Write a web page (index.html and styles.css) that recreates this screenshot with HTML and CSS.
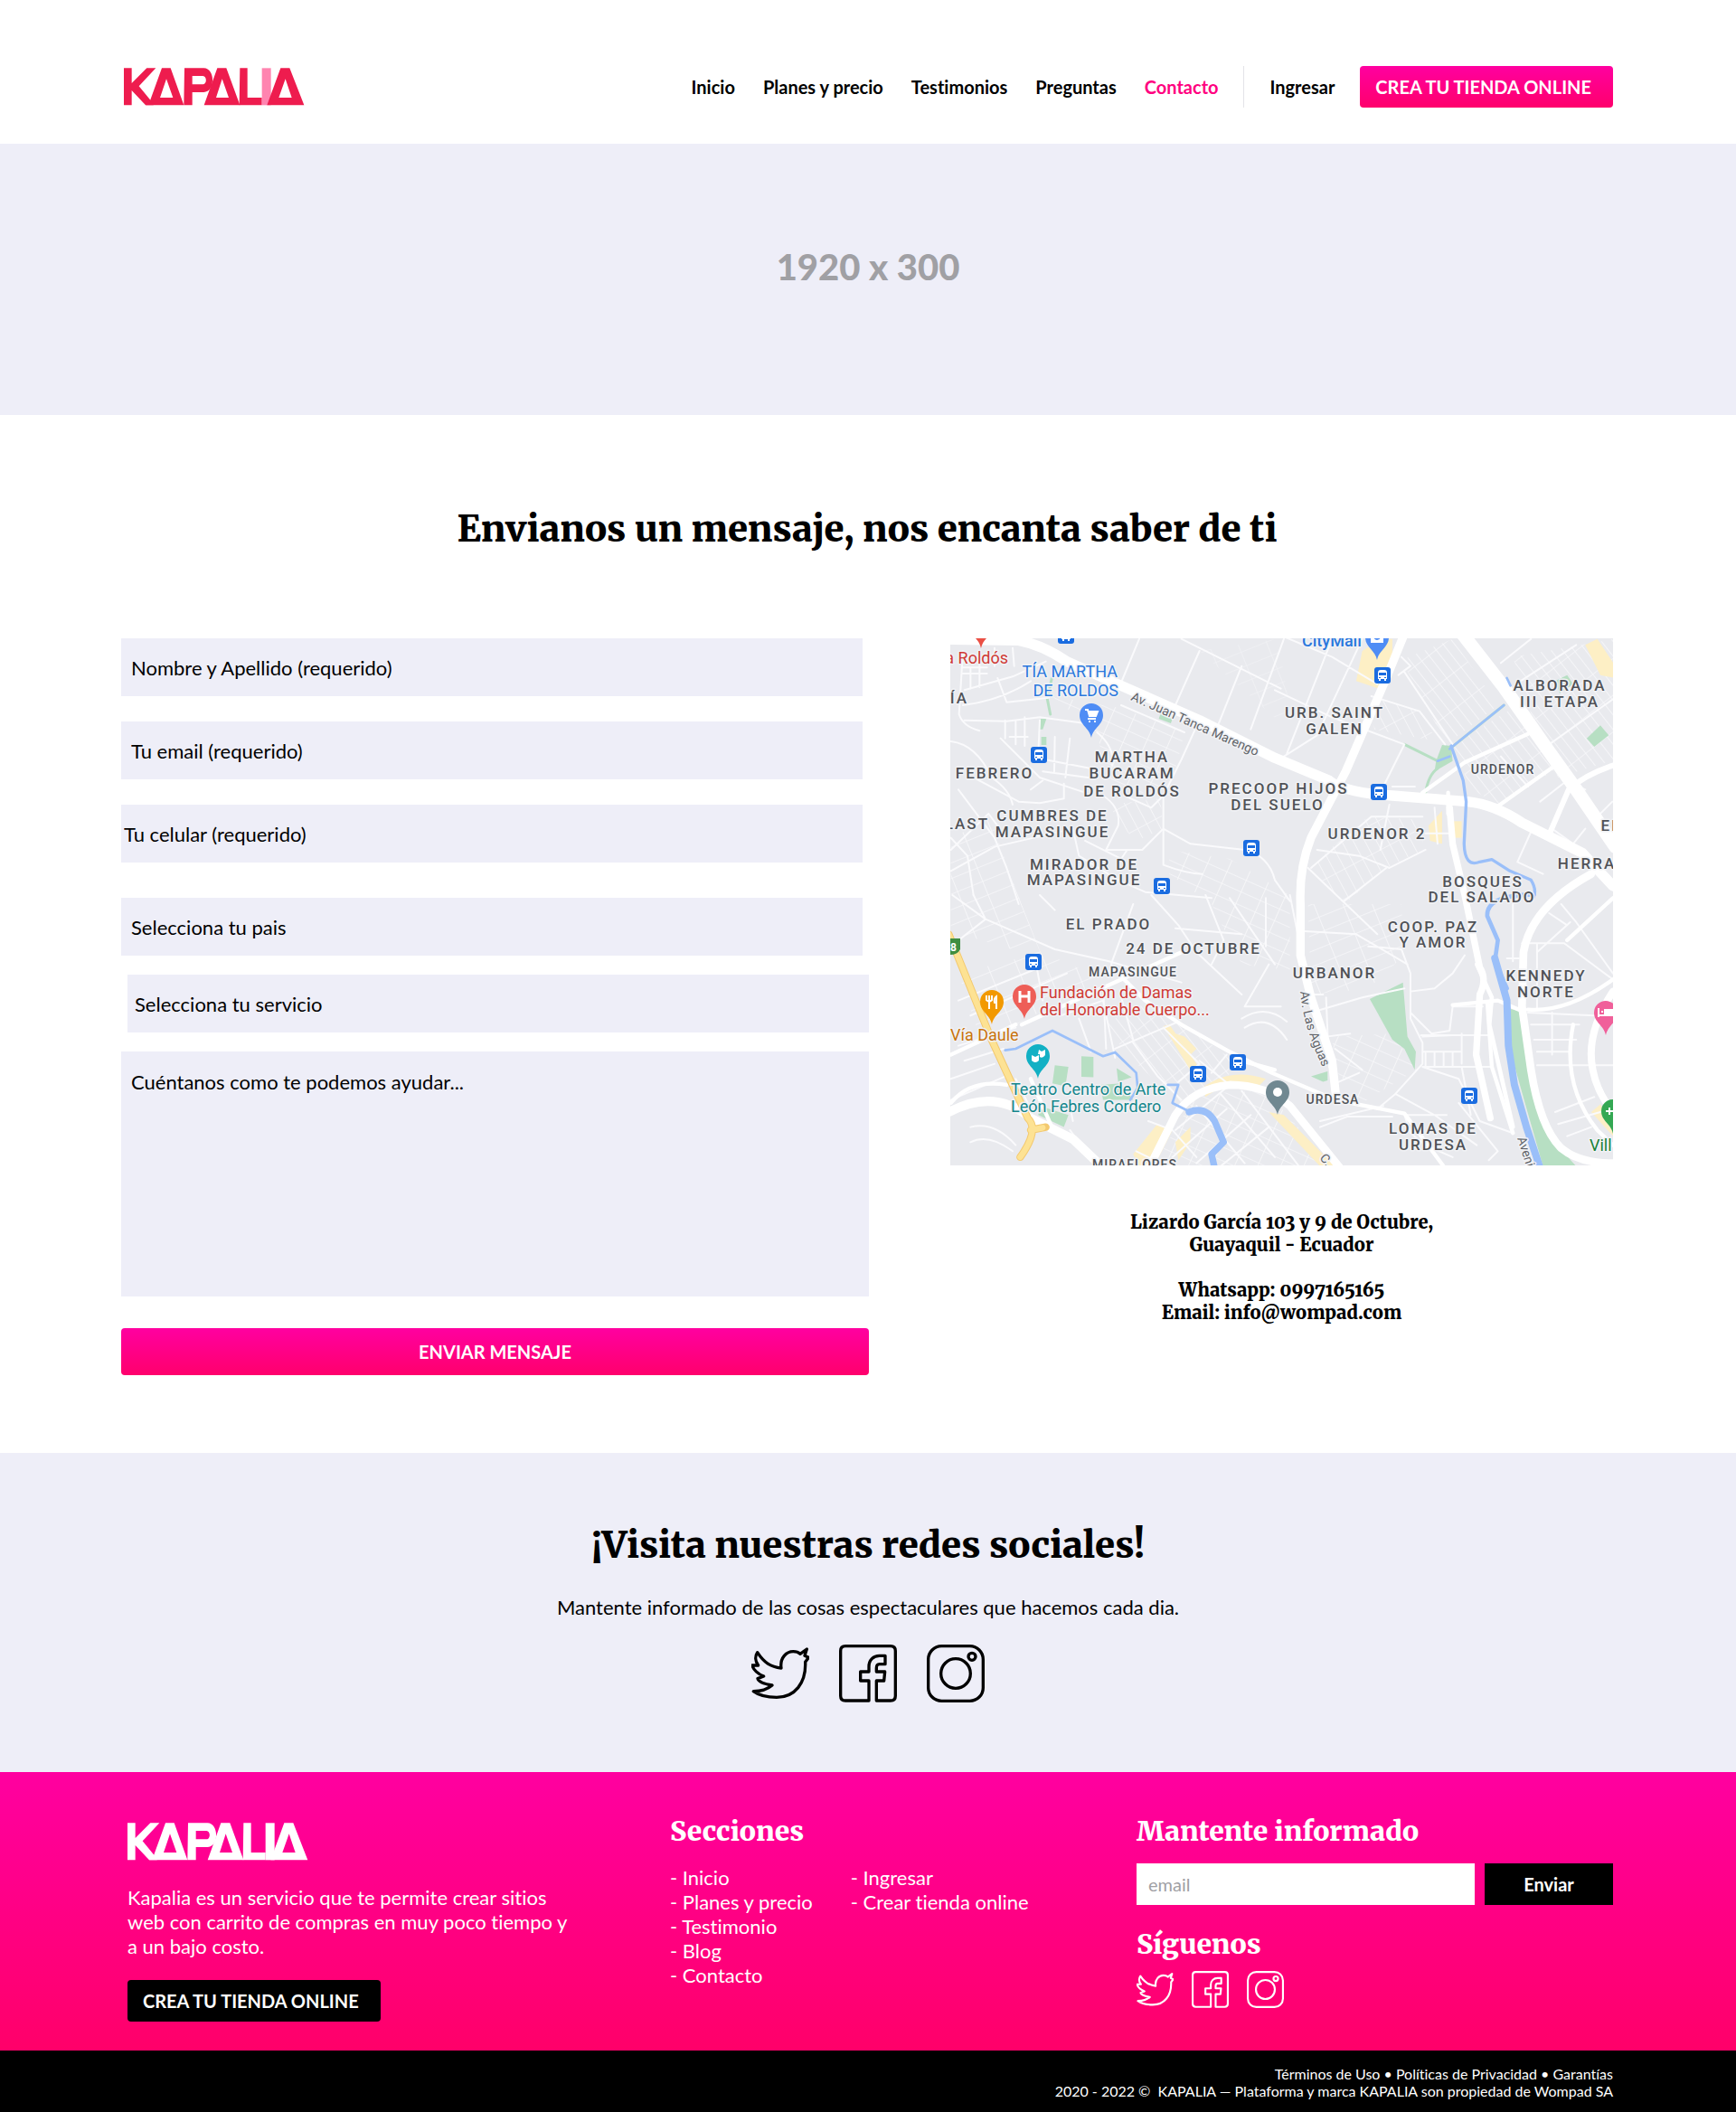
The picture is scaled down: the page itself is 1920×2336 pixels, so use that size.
FILE: index.html
```html
<!DOCTYPE html>
<html lang="es">
<head>
<meta charset="utf-8">
<meta name="viewport" content="width=device-width, initial-scale=1">
<title>Kapalia - Contacto</title>
<link rel="stylesheet" href="styles.css">
</head>
<body>
<svg class="defs" width="0" height="0" aria-hidden="true">
  <symbol id="logo" viewBox="0 0 600 124">
    <g fill="currentColor" fill-rule="evenodd">
      <path d="M0 0H26V50L76 0H106L50 60L98 118V123H72L26 74V123H0Z"/>
      <path d="M126 0H155L199 123H72L84 116ZM141 36L120 98H163Z"/>
      <path d="M201 0H265C304 0 304 80 265 80H227V123H199ZM227 26V54H262C276 54 276 26 262 26Z"/>
      <path d="M310 0H340L385 123H266ZM326 36L306 98H348Z"/>
      <path d="M385 0H410V98H458V123H383Z"/>
      <path class="logo-i" d="M458 0H488V123H458Z"/>
      <path d="M520 0H550L598 123H475ZM536 36L514 98H557Z"/>
    </g>
  </symbol>
  <symbol id="twitter" viewBox="0 0 192 192">
    <path d="M20 26C42 60 64 74 99 78C94 44 116 23 139 23C151 23 159 28 162 31L184 15L177 37L190 43L179 58C182 128 144 175 84 175C54 175 24 168 7 155C29 155 54 148 69 135C44 131 24 125 21 113L41 105C22 98 6 83 3 69L23 69C12 55 12 38 20 26Z"/>
  </symbol>
  <symbol id="facebook" viewBox="0 0 192 192">
    <path d="M99 186H21Q5 186 5 170V21Q5 5 21 5H171Q187 5 187 21V170Q187 186 171 186H124V120H149L152 90H124V78C124 68 127 65 134 65H153V37H134C114 37 99 51 99 73V90H71V120H99Z"/>
  </symbol>
  <symbol id="instagram" viewBox="0 0 192 192">
    <rect x="5" y="5" width="182" height="182" rx="44"/><circle cx="96" cy="96" r="49"/><circle cx="150" cy="40" r="12"/>
  </symbol>
</svg>

<header class="header wrap">
  <a href="#" class="logo" aria-label="Kapalia"><svg width="200" height="42"><use href="#logo"/></svg></a>
  <nav class="nav">
    <a href="#">Inicio</a>
    <a href="#">Planes y precio</a>
    <a href="#">Testimonios</a>
    <a href="#">Preguntas</a>
    <a href="#" class="active">Contacto</a>
    <a href="#" class="login">Ingresar</a>
    <a href="#" class="cta">CREA TU TIENDA ONLINE</a>
  </nav>
</header>

<section class="hero"><p>1920 x 300</p></section>

<main class="contact wrap">
  <h1>Envianos un mensaje, nos encanta saber de ti</h1>
  <div class="columns">
    <form class="form">
      <div class="group">
        <input class="field" type="text" aria-label="Nombre y Apellido" placeholder="Nombre y Apellido (requerido)">
        <input class="field" type="email" aria-label="Tu email" placeholder="Tu email (requerido)">
        <input class="field field-flush" type="tel" aria-label="Tu celular" placeholder="Tu celular (requerido)">
      </div>
      <div class="group group-tight">
        <select class="field" aria-label="Pais"><option>Selecciona tu pais</option></select>
        <select class="field field-end" aria-label="Servicio"><option>Selecciona tu servicio</option></select>
        <textarea class="field message" aria-label="Mensaje" placeholder="Cuéntanos como te podemos ayudar..."></textarea>
      </div>
      <button class="send" type="submit">ENVIAR MENSAJE</button>
    </form>
    <div class="place">
      <svg class="map" viewBox="0 0 733 583" role="img" aria-label="Mapa de Guayaquil">
        <defs>
          <pattern id="blocks-a" width="34" height="88" patternUnits="userSpaceOnUse" patternTransform="rotate(-28)"><path d="M0 0H34M0 0V88"/></pattern>
          <pattern id="blocks-b" width="30" height="96" patternUnits="userSpaceOnUse" patternTransform="rotate(-38)"><path d="M0 0H30M0 0V96"/></pattern>
          <pattern id="blocks-c" width="70" height="42" patternUnits="userSpaceOnUse" patternTransform="rotate(24)"><path d="M0 0H70M0 0V42"/></pattern>
          <pattern id="blocks-d" width="90" height="48" patternUnits="userSpaceOnUse" patternTransform="rotate(-22)"><path d="M0 0H90M0 0V48"/></pattern>
          <g id="bus"><rect x="-9" y="-9" width="18" height="18" rx="3" fill="#1a6ce0"/><path fill="#fff" d="M-5 -3Q-5 -6 -2 -6H2Q5 -6 5 -3V4H4V6H2V4H-2V6H-4V4H-5Z"/><path fill="#1a6ce0" d="M-4 -3H4V0H-4ZM-4 2H-2V3H-4ZM2 2H4V3H2Z"/></g>
          <path id="pin" d="M0 25C-2 14 -13 11 -13 0A13 13 0 0 1 13 0C13 11 2 14 0 25Z"/>
          <path id="aguas" d="M387 391Q390 428 412 475"/>
        </defs>
        <rect width="733" height="583" fill="#e9eaee"/>
        <g transform="translate(-11 -6) scale(.3333)">
          <g class="patches">
            <path fill="url(#blocks-d)" d="M35 690L160 600L270 900L340 1080L35 990Z"/>
            <path fill="url(#blocks-d)" d="M60 1130L340 1060L540 1150L250 1300L140 1370Z"/>
            <path fill="url(#blocks-c)" d="M370 210L600 250L810 330L760 540L560 520L520 330Z"/>
            <path fill="url(#blocks-a)" d="M560 570L730 550L740 650L650 690L600 640Z"/>
            <path fill="url(#blocks-b)" d="M1530 90L1700 20L1850 240L1680 370Z"/>
            <path fill="url(#blocks-b)" d="M1700 370L1900 250L2060 440L1860 570L1760 520Z"/>
            <path fill="url(#blocks-a)" d="M1430 210L1590 260L1650 360L1440 320Z"/>
            <path fill="url(#blocks-a)" d="M1290 720L1420 610L1600 620V720L1480 780L1340 900L1230 780Z"/>
            <path fill="url(#blocks-b)" d="M1900 80L2240 20V420L2050 480L1980 330Z"/>
            <path fill="url(#blocks-c)" d="M760 720L960 750L1160 870L1160 1120L1000 1100L900 900L760 800Z"/>
            <path fill="url(#blocks-d)" d="M1220 900L1530 900L1540 1070L1420 1180L1230 1200Z"/>
            <path fill="url(#blocks-b)" d="M540 1300L700 1220L1000 1440L800 1560L640 1420Z"/>
            <path fill="url(#blocks-c)" d="M850 1530L1080 1520L1310 1780H700Z"/>
            <path fill="url(#blocks-c)" d="M1300 1340L1500 1330L1580 1450L1400 1560L1310 1450Z"/>
            <path fill="url(#blocks-d)" d="M860 60L1120 20L1160 250L1130 300Z" opacity=".5"/>
          </g>
          <g fill="#fdefc5">
            <path d="M1400 60L1460 20H1500V140L1470 190L1380 160Z"/><path d="M2140 40L2180 20L2240 110V150L2190 140Z"/>
            <path d="M1620 640L1665 590V700L1625 690Z"/><path d="M1690 625H1730V680H1690Z"/>
            <path d="M740 1305L760 1300L850 1430L870 1480L835 1460Z"/><path d="M780 1330L810 1340L850 1380L830 1400Z"/>
            <path d="M870 1510Q960 1440 1080 1480L1060 1500Q960 1480 880 1540ZM1090 1590L1140 1600L1310 1770H1260Z"/>
            <path d="M640 1730L720 1630L770 1650L710 1770H660ZM780 1690L830 1640V1690L790 1750Z"/>
            <path d="M2160 1590L2190 1565L2232 1620V1670Z"/>
          </g>
          <g fill="#b7dfc3">
            <path d="M1425 1215L1535 1160L1550 1340L1578 1390L1574 1450L1540 1380L1500 1350Z"/>
            <path d="M1880 1245L1920 1255L1970 1510L2010 1660L2110 1770H2000L1940 1560L1895 1400Z"/>
            <path d="M380 1435L425 1440L415 1505L372 1495ZM468 1405L508 1407V1475L468 1473ZM585 1445L635 1475L590 1490ZM530 1500L600 1495L640 1550H540ZM330 1570L425 1600L410 1640L325 1600Z"/>
            <path d="M1645 425L1665 372L1695 375L1700 425L1640 460Z"/><path d="M2145 350L2190 307L2218 340L2170 378Z"/>
            <path d="M333 285H352L340 320H330ZM335 345H352V372H335ZM730 270L770 285L765 300L725 285ZM2040 160L2080 140L2100 170L2055 200ZM1230 1472L1285 1455V1485L1270 1490Z"/>
          </g>
          <g class="park-line">
            <path d="M370 150L355 220L365 270M1540 370L1620 410L1650 425M1610 530Q1620 470 1650 450M1690 385L1870 240"/>
          </g>
          <g class="minor">
            <path d="M75 60L62 270Q75 310 130 325M75 115H155M75 135H155M100 120V185M130 60V180M180 50V110M240 50L245 110M80 190L240 145L350 95M75 240Q200 225 300 160M80 290L220 293L330 280L480 300M190 150L220 230L360 215M215 290V350M250 290V370M280 280V375M230 345H290M330 290L325 400M380 345L378 460M430 350L415 480M340 460L490 480M345 420L500 450M520 330Q580 380 570 440M200 350L330 480L480 530M35 360Q120 370 170 480Q230 520 240 570"/>
            <path d="M110 480L260 560L330 565L410 550V500M340 490L300 520M60 520L180 680L220 780L260 900M35 790L180 710L440 650M35 680L90 740L110 870M35 720L160 600L190 640M440 650L460 740L590 820L680 860L900 880M550 720L590 640Q600 580 540 540M740 540V650L670 720L550 720M740 650L830 700L1010 720Q1090 740 1110 820L1160 890M740 650V770Q820 800 870 800M610 540L700 580L740 540L800 420L850 310M810 330L600 240M480 690L600 750L620 720"/>
            <path d="M660 20L600 165M800 20L1130 185M860 60L780 240M1000 110L920 310M1140 20L1030 320M1110 0L1300 80L1450 170M1110 190L1300 280L1540 370M1400 20L1250 340L1140 410M1300 20L1150 400M1540 370L1470 510M1500 510H1575M1430 210L1590 260L1675 370M1540 130L1700 370M1530 80L1560 110L1520 140M1910 170L2110 40M1860 100L1960 20M2020 370L2232 220"/>
            <path d="M1490 570L1460 720M1640 580L1650 700M1600 610H1430L1230 780M1610 665H1700M1610 720L1490 780L1390 740L1250 720M1220 780L1450 1000M1340 890L1480 780M1850 575L2040 440M1990 560L2080 490L2140 520M1960 660L1915 760L2000 800M2030 650L2100 700L2140 650M2230 560L2170 620M1860 410L1950 510"/>
            <path d="M40 870L150 950L380 1050L560 1090L800 1160M150 950L110 870M35 1040L150 950M380 920L330 870M640 900L570 1090L560 1130M700 870L790 970L850 1060L1000 1200M880 870L940 1020L900 1100M960 880L1110 1100M780 980L1000 1000M1080 880V1040M1090 1100L1010 1240L1130 1240M1000 1280Q1080 1230 1150 1290M1010 1310Q1090 1260 1150 1350"/>
            <path d="M60 1220L330 1110M100 1270L420 1130M60 1370L250 1310M80 1420L210 1380M35 1480L180 1430M35 1550L220 1470M320 1110L340 1220M540 1170L550 1380M400 1270L540 1220L580 1410M460 1280L500 1390M600 1210L640 1350M580 1380L790 1290M640 1360L720 1470L800 1550M740 1310L860 1430L790 1490M860 1420L960 1500M950 1400L900 1460M250 1480L290 1560M430 1650L520 1770M440 1620L430 1570M100 1640Q180 1620 250 1700M100 1690Q160 1660 240 1720M650 1720L730 1760M690 1620L770 1650L850 1740M780 1650L960 1500M850 1570L1010 1760M930 1530L1110 1740M1000 1520L1190 1770M770 1740L950 1580M850 1760L1030 1600M930 1770L1090 1640"/>
            <path d="M1210 990L1380 1000L1550 1100M1160 870L1200 1070M1420 1040L1530 1050L1560 1130V1280L1600 1360V1430L1510 1530M1560 1190L1640 1180L1700 1130L1740 1070M1600 1340L1700 1335M1560 1260L1630 1330L1690 1320L1700 1240M1595 1335H1820M1600 1440H1830M1600 1390H1730M1730 1330V1430M1610 1395V1440M1640 1390V1440M1670 1390V1440M1700 1390V1440M1700 1240H1800M1230 1260L1400 1210L1540 1180M1230 1200H1270M1280 1210L1290 1440M1280 1340L1360 1330M1310 1380L1400 1450M1300 1500L1390 1460M1450 1580L1510 1530L1640 1600L1780 1700M1600 1440L1720 1480L1790 1620L1900 1660M1730 1440L1760 1600M1470 1570L1260 1620M1550 1600L1680 1600"/>
            <path d="M1900 900V1090M1930 1030H2070L2232 1150M2060 900L2110 960L2232 1130M1980 1030V1250M1880 1080H1920M1950 1260L2170 1270M1960 1300H2120M1970 1350H2110M1980 1390H2090M1980 1435H2232M2030 1260V1400M2090 960L1980 1060M2020 930L2080 970M2040 1590L2170 1540M2050 1630L2190 1590M2080 1670L2160 1640M1260 1640L1350 1605H1500M1540 1600L1560 1660L1610 1700L1700 1740M1720 1560L1850 1720L1820 1750"/>
          </g>
          <g class="road">
            <path d="M270 1300L800 1060M250 1300L35 1400M600 1140L680 1220L800 1300L960 1390L1100 1460L1310 1550L1540 1595L1670 1770"/>
            <path d="M1600 530L1740 430L1950 335M1850 575L2040 440M1685 530V600M1815 1225L1830 1440L1900 1660M1700 1235L1850 1220L1930 1255M2232 880L2080 1020M1950 1250Q2080 1260 2232 1150M2100 1300Q2060 1500 2180 1650L2232 1700"/>
            <path d="M1000 1420L1110 1450M300 1480L370 1640M35 1560Q100 1480 220 1500"/>
          </g>
          <g class="major">
            <path d="M35 22L260 25Q340 40 420 95L600 175L860 290L1110 415L1290 490Q1340 530 1500 540L1750 560Q1840 570 1930 630L2130 730L2232 840" stroke-width="34"/>
            <path d="M1730 0L1870 180L2010 380L2110 520L2240 710" stroke-width="44"/>
            <path d="M1535 15L1480 150L1345 460L1230 680Q1190 780 1195 900L1195 1070L1230 1210L1300 1420L1312 1530" stroke-width="28"/>
            <path d="M1690 580L1700 700L1740 870L1790 1110Q1815 1150 1790 1200L1778 1400L1825 1610" stroke-width="22"/>
            <path d="M2020 670L2085 520Q2140 470 2232 440" stroke-width="18"/>
            <path d="M2160 800Q1960 910 1935 1060L1930 1240L1960 1450Q1990 1640 2060 1710Q2120 1760 2232 1760" stroke-width="26"/>
            <path d="M2232 1190Q2140 1330 2165 1450Q2180 1530 2240 1600" stroke-width="24"/>
            <path d="M30 1590Q180 1510 300 1610L440 1680L540 1775" stroke-width="30"/>
            <path d="M690 1780L780 1600Q840 1510 960 1500Q1080 1500 1160 1570L1330 1780" stroke-width="26"/>
            <path d="M1780 1100L1830 1210L1822 1300L1900 1640" stroke-width="14"/>
          </g>
          <path class="highway" stroke="#f3c96f" stroke-width="25" d="M28 1000L170 1350L290 1610Q330 1650 265 1740M300 1650L350 1640"/>
          <path class="highway" stroke="#fde293" stroke-width="19" d="M28 1000L170 1350L290 1610Q330 1650 265 1740M300 1650L340 1642"/>
          <g class="water">
            <path d="M1695 375L1735 490L1745 560L1738 700Q1740 780 1790 760L1830 752L1890 790L1960 820Q1985 860 1960 890" stroke-width="10"/>
            <path d="M1970 868Q1810 870 1815 940L1850 1020L1840 1090L1880 1180" stroke-width="14"/>
            <path d="M1840 1080L1880 1220L1885 1370L1905 1500L1945 1640L1990 1775" stroke-width="24"/>
            <path d="M1690 385L1870 240M1690 410L1650 425M1880 150L1892 175" stroke-width="8"/>
            <path d="M215 1385L250 1380L372 1320L540 1405L580 1392L650 1460L655 1510L630 1550M755 1500L790 1500L770 1560L830 1590" stroke-width="8"/>
            <path d="M825 1590Q880 1570 910 1620L940 1690L900 1730L910 1775" stroke-width="22"/>
          </g>
        </g>
        <g class="district">
          <text x="20" y="72" text-anchor="end">ÍA</text>
          <text x="201" y="137">MARTHA</text><text x="201" y="155">BUCARAM</text><text x="201" y="175">DE ROLDÓS</text>
          <text x="49" y="155">FEBRERO</text>
          <text x="363" y="172">PRECOOP HIJOS</text><text x="362" y="190">DEL SUELO</text>
          <text x="113" y="202">CUMBRES DE</text><text x="113" y="220">MAPASINGUE</text>
          <text x="43" y="211" text-anchor="end">LAST</text>
          <text x="148" y="256">MIRADOR DE</text><text x="148" y="273">MAPASINGUE</text>
          <text x="425" y="88">URB. SAINT</text><text x="425" y="106">GALEN</text>
          <text x="674" y="58">ALBORADA</text><text x="674" y="76">III ETAPA</text>
          <text x="472" y="222">URDENOR 2</text>
          <text x="731" y="213">EL</text><text x="704" y="255">HERRA</text>
          <text x="589" y="275">BOSQUES</text><text x="588" y="292">DEL SALADO</text>
          <text x="175" y="322">EL PRADO</text><text x="269" y="349">24 DE OCTUBRE</text>
          <text x="534" y="325">COOP. PAZ</text><text x="534" y="342">Y AMOR</text>
          <text x="425" y="376">URBANOR</text>
          <text x="659" y="379">KENNEDY</text><text x="659" y="397">NORTE</text>
          <text x="534" y="548">LOMAS DE</text><text x="534" y="566">URDESA</text>
        </g>
        <g class="district small">
          <text x="611" y="150">URDENOR</text><text x="202" y="374">MAPASINGUE</text>
          <text x="423" y="515">URDESA</text><text x="204" y="587">MIRAFLORES</text>
        </g>
        <g class="street">
          <text transform="translate(199 68) rotate(24)">Av. Juan Tanca Marengo</text>
          <text><textPath href="#aguas">Av. Las Aguas</textPath></text>
          <text transform="translate(627 553) rotate(72)">Aveni</text>
          <text transform="translate(408 575) rotate(50)">C.</text>
        </g>
        <g class="poi">
          <text x="64" y="28" text-anchor="end" fill="#cf3a34">a Roldós</text>
          <text x="185" y="43" text-anchor="end" fill="#2a78dd">TÍA MARTHA</text><text x="186" y="64" text-anchor="end" fill="#2a78dd">DE ROLDOS</text>
          <text x="389" y="9" fill="#2a78dd" font-weight="500">CityMall</text>
          <text x="99" y="398" fill="#cf3a34">Fundación de Damas</text><text x="99" y="417" fill="#cf3a34">del Honorable Cuerpo...</text>
          <text x="0" y="445" fill="#c9730c">Vía Daule</text>
          <text x="67" y="505" fill="#15868c">Teatro Centro de Arte</text><text x="67" y="524" fill="#15868c">León Febres Cordero</text>
          <text x="707" y="567" fill="#188038">Vill</text>
        </g>
        <path fill="#3e8e41" d="M0 332H11V344Q8 350 0 350Z"/><text x="0" y="346" class="shield">8</text>
        <use href="#bus" x="128" y="-3"/><use href="#bus" x="98" y="129"/><use href="#bus" x="333" y="232"/><use href="#bus" x="234" y="274"/><use href="#bus" x="478" y="41"/><use href="#bus" x="474" y="170"/><use href="#bus" x="92" y="358"/><use href="#bus" x="318" y="469"/><use href="#bus" x="274" y="482"/><use href="#bus" x="574" y="506"/>
        <g stroke="#fff" fill="none" stroke-width="2">
          <use href="#pin" x="34" y="-14" fill="#ea4f44" stroke="none"/>
          <g transform="translate(156 85)"><use href="#pin" fill="#4f8df5" stroke="none"/><path fill="#fff" d="M-7 -6H-4L-2 1H5L7 -4H-3"/><path d="M-4 4H5M-3 7H-1M3 7H5"/></g>
          <g transform="translate(472 -1)"><use href="#pin" fill="#4f8df5" stroke="none"/><path fill="#fff" d="M-6 -4H6V5H-6Z"/><path stroke="#4f8df5" d="M-3 0Q0 4 3 0"/></g>
          <g transform="translate(46 402)"><use href="#pin" fill="#f29900" stroke="none"/><path d="M-6 -7V-2Q-3 1 0 -2V-7M-3 -7V8M5 8V-6Q2 -4 3 1H5"/></g>
          <g transform="translate(82 396)"><use href="#pin" fill="#ee5e57" stroke="none"/><path stroke-width="3" d="M-5 -6V7M5 -6V7M-5 0H5"/></g>
          <g transform="translate(97 462)"><use href="#pin" fill="#12b0c4" stroke="none"/><path fill="#fff" stroke="none" d="M-7 -1L-3 1L1 -1V5Q-3 9 -7 5ZM1 -7L4 -5L8 -7V-1Q5 3 2 1V-2H0Z"/></g>
          <g transform="translate(362 502)"><use href="#pin" fill="#708891" stroke="none"/><circle r="5" fill="#fff" stroke="none"/></g>
          <g transform="translate(725 414)"><use href="#pin" fill="#f0609a" stroke="none"/><path d="M-8 -5V5M-8 3H8M-5 -1H-3"/><path fill="#fff" d="M-1 -3H8V1H-1Z"/></g>
          <g transform="translate(733 523)"><use href="#pin" fill="#34a853" stroke="none"/><path d="M-8 0H0M-4 -4V4"/></g>
        </g>
      </svg>
      <address>
        <p>Lizardo García 103 y 9 de Octubre,<br>Guayaquil - Ecuador</p>
        <p>Whatsapp: 0997165165<br>Email: info@wompad.com</p>
      </address>
    </div>
  </div>
</main>

<section class="social">
  <h2>¡Visita nuestras redes sociales!</h2>
  <p>Mantente informado de las cosas espectaculares que hacemos cada dia.</p>
  <div class="icons icons-large">
    <a href="#" aria-label="Twitter"><svg><use href="#twitter"/></svg></a>
    <a href="#" aria-label="Facebook"><svg><use href="#facebook"/></svg></a>
    <a href="#" aria-label="Instagram"><svg><use href="#instagram"/></svg></a>
  </div>
</section>

<footer>
  <div class="footer wrap">
    <div class="about">
      <a href="#" class="logo logo-white" aria-label="Kapalia"><svg width="200" height="42"><use href="#logo"/></svg></a>
      <p>Kapalia es un servicio que te permite crear sitios web con carrito de compras en muy poco tiempo y a un bajo costo.</p>
      <a href="#" class="cta cta-dark">CREA TU TIENDA ONLINE</a>
    </div>
    <div class="sections">
      <h3>Secciones</h3>
      <div class="lists">
        <ul>
          <li><a href="#">- Inicio</a></li>
          <li><a href="#">- Planes y precio</a></li>
          <li><a href="#">- Testimonio</a></li>
          <li><a href="#">- Blog</a></li>
          <li><a href="#">- Contacto</a></li>
        </ul>
        <ul>
          <li><a href="#">- Ingresar</a></li>
          <li><a href="#">- Crear tienda online</a></li>
        </ul>
      </div>
    </div>
    <div class="news">
      <h3>Mantente informado</h3>
      <form class="subscribe">
        <input type="email" aria-label="email" placeholder="email">
        <button type="submit">Enviar</button>
      </form>
      <h3>Síguenos</h3>
      <div class="icons">
        <a href="#" aria-label="Twitter"><svg><use href="#twitter"/></svg></a>
        <a href="#" aria-label="Facebook"><svg><use href="#facebook"/></svg></a>
        <a href="#" aria-label="Instagram"><svg><use href="#instagram"/></svg></a>
      </div>
    </div>
  </div>
  <div class="legal wrap">
    <p><a href="#">Términos de Uso</a> • <a href="#">Políticas de Privacidad</a> • <a href="#">Garantías</a></p>
    <p>2020 - 2022 ©&nbsp; KAPALIA — Plataforma y marca KAPALIA son propiedad de Wompad SA</p>
  </div>
</footer>
</body>
</html>
```
FILE: styles.css
```css
* { box-sizing: border-box; }
body {
  margin: 0;
  background: #fff;
  color: #000;
  font-family: Lato, "Liberation Sans", sans-serif;
  font-size: 22px;
  font-variant-ligatures: none;
  line-height: 27px;
}
h1, h2, h3, p, ul { margin: 0; padding: 0; }
h1, h2, h3, address { font-family: Merriweather, "DejaVu Serif Condensed", "DejaVu Serif", serif; font-weight: 900; }
h1, h2 { font-size: 40px; line-height: 50px; text-align: center; }
h3 { font-size: 30px; line-height: 36px; }
a { color: inherit; text-decoration: none; }
ul { list-style: none; }
input, select, textarea, button { font: inherit; font-variant-ligatures: none; color: inherit; border: 0; border-radius: 0; margin: 0; }
button { cursor: pointer; }
svg { display: block; }
.defs { position: absolute; }
.wrap { padding-left: 134px; padding-right: 136px; }

.header { display: flex; justify-content: space-between; align-items: center; padding-top: 73px; padding-bottom: 40px; }
.header .logo { margin-left: 3px; }
.logo { --pale: #ff84b0; color: #ee1c4e; display: block; }
.logo-white { --pale: #fff; color: #fff; }
.logo-i { fill: var(--pale); }
.nav { display: flex; align-items: center; gap: 31px; font-size: 20px; font-weight: 700; line-height: 46px; }
.nav .active { color: #ff0080; }
.nav .login { border-left: 1px solid #e4e4e8; padding-left: 28px; margin: 0 -3px; }
.cta {
  display: inline-block;
  padding: 0 24px 0 17px;
  border-radius: 4px;
  background: linear-gradient(#ff00a0, #ff006c);
  color: #fff;
  font-size: 20px;
  font-weight: 700;
  line-height: 46px;
}
.cta-dark { background: #000; }

.hero { display: flex; justify-content: center; background: #eeeef8; height: 300px; padding-top: 111px; }
.hero p { font-size: 40px; font-weight: 900; line-height: 50px; color: #a0a0a4; }

.contact { padding-top: 101px; padding-bottom: 86px; }
.columns { display: grid; grid-template-columns: 827fr 733fr; gap: 90px; margin-top: 96px; }
.form { display: flex; flex-direction: column; }
.group { display: flex; flex-direction: column; gap: 28px; align-items: flex-start; }
.group-tight { gap: 21px; margin-top: 39px; }
.field { width: calc(100% - 7px); height: 64px; padding: 0 11px; background: #eeeef8; appearance: none; }
.field::placeholder { color: #000; opacity: 1; }
.field-flush { padding: 0 3px; }
.field-end { align-self: flex-end; padding: 0 8px; }
.message { display: block; width: 100%; height: 271px; padding: 20px 11px; resize: none; }
.send {
  height: 52px;
  margin-top: 35px;
  border-radius: 4px;
  background: linear-gradient(#ff00a0, #ff006c);
  color: #fff;
  font-size: 20px;
  font-weight: 700;
}
.map { width: 100%; height: auto; overflow: hidden; font-family: Roboto, "Liberation Sans", sans-serif; }
.map pattern path { fill: none; stroke: #f8f8fa; stroke-width: 5; }
.minor, .road, .major, .water, .park-line, .highway { fill: none; stroke-linejoin: round; stroke-linecap: round; }
.minor { stroke: #fafafc; stroke-width: 6; }
.road { stroke: #fff; stroke-width: 13; }
.major { stroke: #fff; }
.water { stroke: #9abff9; }
.park-line { stroke: #b7dfc3; stroke-width: 9; }
.district, .street, .poi { stroke: #f1f2f5; stroke-width: 3px; paint-order: stroke; stroke-linejoin: round; }
.district { font-size: 17px; font-weight: 500; letter-spacing: 2px; text-anchor: middle; fill: #505257; }
.small { font-size: 14px; letter-spacing: 1px; }
.street { font-size: 14px; fill: #606368; }
.poi { font-size: 18px; }
.shield { font-size: 12px; font-weight: 700; fill: #fff; }
address { margin-top: 50px; font-size: 20px; font-style: normal; font-variant-numeric: oldstyle-nums; line-height: 25px; text-align: center; }
address p + p { margin-top: 25px; }

.social { display: flex; flex-direction: column; align-items: center; background: #eeeef8; padding: 77px 0; }
.social p { margin: 30px 0 28px; }
.icons { display: flex; gap: 20px; }
.icons svg { width: 41px; height: 41px; fill: none; stroke: currentColor; stroke-width: 10; stroke-linejoin: round; }
.icons-large { gap: 33px; }
.icons-large svg { width: 64px; height: 64px; }

.footer {
  display: grid;
  grid-template-columns: 607fr 516fr 527fr;
  background: linear-gradient(#ff00a0, #ff0069);
  color: #fff;
  min-height: 308px;
  padding-top: 47px;
  padding-bottom: 30px;
}
.about { padding: 9px 100px 0 7px; }
.about p { margin: 27px 0 24px; }
.lists { display: flex; gap: 42px; margin-top: 20px; }
.subscribe { display: flex; gap: 11px; margin: 18px 0 25px; }
.subscribe input { flex: 1; min-width: 0; height: 46px; padding: 0 13px; background: #fff; color: #000; font-size: 20px; }
.subscribe input::placeholder { color: #a0a0a4; opacity: 1; }
.subscribe button { width: 142px; height: 46px; background: #000; color: #fff; font-size: 20px; font-weight: 700; }
.news .icons { margin-top: 12px; }
.legal { background: #000; color: #fff; font-size: 16px; line-height: 19px; text-align: right; padding-top: 16px; padding-bottom: 14px; }
```
